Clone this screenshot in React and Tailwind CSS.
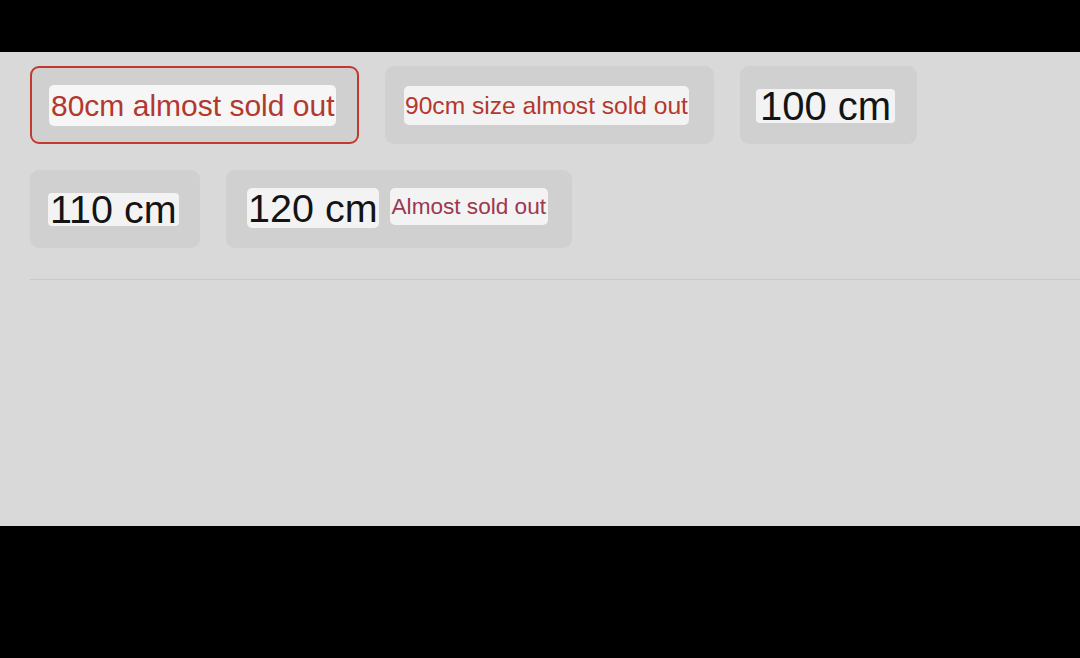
// App.jsx
import React from 'react';

const Chip = ({ selected, width, pl, children }) => (
    <div
        className={`flex h-[78px] items-center gap-[11px] rounded-[9px] bg-[#d0d0d0] ${width} ${pl} ${
            selected ? 'border-2 border-[#c1392f]' : ''
        }`}
    >
        {children}
    </div>
);

export default function App() {
    return (
        <div className="flex h-[658px] w-[1080px] flex-col bg-black" style={{ fontFamily: '"Liberation Sans", Arial, sans-serif' }}>
            <div className="h-[52px] shrink-0" />
            <div className="flex h-[474px] shrink-0 flex-col bg-[#d9d9d9] pl-[30px] pt-[14px]">
                {/* row 1 */}
                <div className="flex gap-[26px]">
                    <Chip selected width="w-[329px]" pl="pl-[17px]">
                        <span className="rounded-[5px] bg-[#f6f6f6] px-[2px] py-[3px] text-[30px] leading-[35px] text-[#b3382e]">
                            80cm almost sold out
                        </span>
                    </Chip>
                    <Chip width="w-[329px]" pl="pl-[19px]">
                        <span className="rounded-[5px] bg-[#f3f3f3] px-px py-[4px] text-[24.6px] leading-[31px] text-[#b3382e]">
                            90cm size almost sold out
                        </span>
                    </Chip>
                    <Chip width="w-[177px]" pl="pl-[16px]">
                        <span className="mt-[2px] rounded-[4px] bg-[#f3f3f3] px-[4px] text-[40px] leading-[34px] text-[#141414]">
                            100 cm
                        </span>
                    </Chip>
                </div>

                {/* row 2 */}
                <div className="mt-[26px] flex gap-[26px]">
                    <Chip width="w-[170px]" pl="pl-[18px]">
                        <span className="mt-px rounded-[4px] bg-[#f3f3f3] px-[2px] text-[39.5px] leading-[33px] text-[#141414]">
                            110 cm
                        </span>
                    </Chip>
                    <Chip width="w-[346px]" pl="pl-[21px]">
                        <span className="-mt-[3px] rounded-[5px] bg-[#f3f3f3] px-[1px] text-[39.5px] leading-[40px] text-[#141414]">
                            120 cm
                        </span>
                        <span className="-mt-[5px] rounded-[5px] bg-[#f3f3f3] px-[2px] py-[5px] text-[22.6px] leading-[27px] text-[#9c3850]">
                            Almost sold out
                        </span>
                    </Chip>
                </div>

                <div className="mt-[31px] h-px bg-[#c9c9c9]" />
            </div>
            <div className="flex-1" />
        </div>
    );
}
